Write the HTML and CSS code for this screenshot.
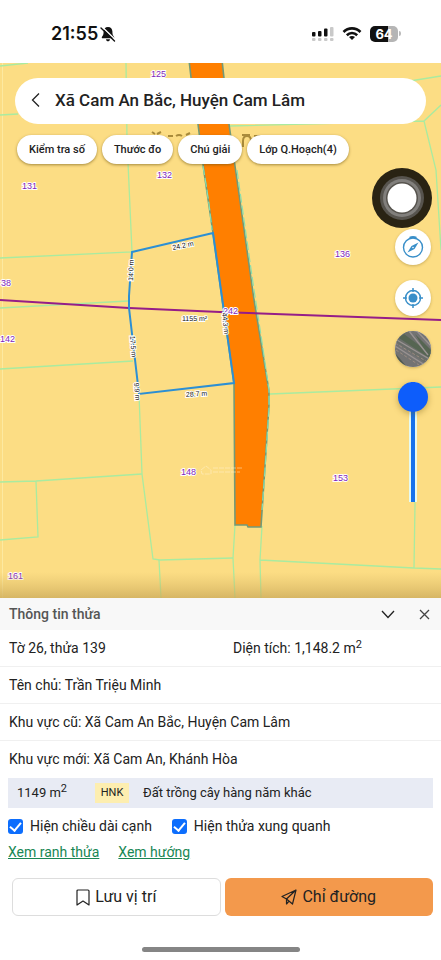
FILE: index.html
```html
<!DOCTYPE html>
<html lang="vi">
<head>
<meta charset="utf-8">
<meta name="viewport" content="width=device-width, initial-scale=1">
<title>Thông tin thửa</title>
<link rel="stylesheet" href="styles.css">
</head>
<body>
<header class="status">
  <div class="status-left">
    <span class="clock">21:55</span>
    <svg width="16" height="16" viewBox="0 0 16 16" aria-hidden="true">
      <path d="M8 1C5.200 1 3.700 3 3.600 5.500C3.500 9 3 9.500 1.800 11.200C1.600 12 2 12.300 2.600 12.300H13.400C14 12.300 14.400 12 14.200 11.200C13 9.500 12.500 9 12.400 5.500C12.300 3 10.800 1 8 1ZM6 13.300C6.300 16 9.700 16 10 13.300Z" fill="#111"/>
      <path d="M2.500 1.200L15.500 13.800" stroke="#fff" stroke-width="1.400"/>
      <path d="M1 2L14.500 15" stroke="#111" stroke-width="1.400" stroke-linecap="round"/>
    </svg>
  </div>
  <div class="status-right">
    <svg width="23" height="16" viewBox="0 0 23 16" aria-hidden="true">
      <g fill="#111"><rect x="1" y="6" width="3.500" height="4.500" rx="1"/><rect x="7" y="5" width="3.500" height="5.500" rx="1"/><rect x="13" y="2.500" width="3.500" height="8" rx="1"/></g>
      <g fill="#c9c9c9"><rect x="19" y="1" width="3.500" height="9.500" rx="1"/><rect x="1" y="12" width="3.500" height="3" rx="1"/><rect x="7" y="12" width="3.500" height="3" rx="1"/><rect x="13" y="12" width="3.500" height="3" rx="1"/><rect x="19" y="12" width="3.500" height="3" rx="1"/></g>
    </svg>
    <svg width="20" height="15" viewBox="0 0 20 15" aria-hidden="true" fill="none" stroke="#111" stroke-width="2.600">
      <path d="M1.500 6C6.300 1.100 13.700 1.100 18.500 6"/><path d="M4.800 9.200C7.800 6.300 12.200 6.300 15.200 9.200"/>
      <path d="M10 14L7 11C8.700 9.600 11.300 9.600 13 11Z" fill="#111" stroke="none"/>
    </svg>
    <div class="battery"><span class="level">64</span><i class="battery-tip"></i></div>
  </div>
</header>

<main class="map">
  <svg class="map-canvas" viewBox="0 63 441 535" preserveAspectRatio="xMidYMid slice" role="img" aria-label="Bản đồ thửa đất">
    <defs><linearGradient id="fade" x1="0" y1="0" x2="0" y2="1"><stop offset="0" stop-color="#d9b866" stop-opacity="0"/><stop offset="1" stop-color="#cdac5c" stop-opacity=".8"/></linearGradient></defs>
    <rect y="63" width="441" height="535" fill="#fcdd84"/>
    <path d="M2.500 63V598" stroke="#fde9a0"/>
    <g fill="none" stroke="#7d5f14" stroke-width="2" opacity=".65">
      <path d="M152 132l3 2M157 134l4-2M168 136h5M176 136q3-2 6 0M186 135l4-2M242 135h8M243 147v-6q0-5 4-5t4 5v6h4M254 136h6"/>
    </g>
    <g fill="none" stroke="#a9eba0" stroke-width="1.300">
      <path d="M0 66L28 63M126 63L127 140L132 252L0 258M0 308L128 301M0 369L133 361M139 394L142 474L153 559L160 560L233 558"/>
      <path d="M0 482L36 481L142 474M36 481L38 537L0 540M159 560L161 598M235 525L233 558L235 598M262 526L260 560L261 598M260 560L414 568L441 569M414 400L415 504L414 568M270 394L441 387M229 126L424 121L441 105M410 81L441 76M424 121L436 170L441 250M0 115L18 114"/>
    </g>
    <path d="M189 60L192 86L198 124L204 172L213 233L223 306L234 384L235 525H247L248 527H261L269 405V391L254 300L243 222L235 166L229 124L222 60Z" fill="#ff7f00" stroke="#739a78" stroke-width="1.600"/>
    <path d="M203 166L206 184L209 204L212 230M237 170L244 220L254 290L262 342L269 390V408L265 470L262 510" fill="none" stroke="#89dfaf" stroke-width="1.200" stroke-dasharray="9 3"/>
    <path d="M0 300L129 308L220 312L441 320" fill="none" stroke="#951d88" stroke-width="2"/>
    <path d="M132 252L213 233L234 383L139 394L129 308V296Z" fill="none" stroke="#2c8fd4" stroke-width="2"/>
    <g fill="none" stroke="#fff3d1" stroke-width="1" opacity=".5"><path d="M201 470l5-4 5 4v4h-9zM213 468h29M213 472h27" stroke-dasharray="5 1"/></g>
    <g class="plot">
      <text x="151" y="77">125</text><text x="157" y="178">132</text><text x="22" y="189">131</text><text x="1" y="286">38</text><text x="0" y="342">142</text><text x="335" y="257">136</text><text x="223" y="314">242</text><text x="181" y="475">148</text><text x="333" y="481">153</text><text x="8" y="579">161</text>
    </g>
    <g class="measure">
      <text transform="translate(173 250) rotate(-12)">24.2 m</text>
      <text transform="translate(133 281) rotate(-88)">14.0 m</text>
      <text transform="translate(130 336) rotate(85)">17.5 m</text>
      <text transform="translate(134 383) rotate(85)">9.9 m</text>
      <text transform="translate(186 397) rotate(-4)">28.7 m</text>
      <text transform="translate(222 313) rotate(84)">44.3 m</text>
      <text x="182" y="321">1155 m²</text>
    </g>
    <rect y="572" width="441" height="26" fill="url(#fade)"/>
  </svg>

  <div class="search">
    <button class="icon-button" aria-label="Quay lại"><svg width="10" height="16" viewBox="0 0 10 16" fill="none" stroke="#222" stroke-width="1.300"><path d="M8 1.500L1.500 8L8 14.500"/></svg></button>
    <h1>Xã Cam An Bắc, Huyện Cam Lâm</h1>
  </div>
  <nav class="chips">
    <button>Kiểm tra số</button><button>Thước đo</button><button>Chú giải</button><button>Lớp Q.Hoạch(4)</button>
  </nav>
  <div class="tools">
    <button class="touch" aria-label="Trợ năng"><svg width="60" height="60" viewBox="0 0 60 60"><circle cx="30" cy="30" r="30" fill="#292313"/><circle cx="30" cy="30" r="22" fill="#57544e"/><circle cx="30" cy="30" r="19" fill="#817f7c"/><circle cx="30" cy="30" r="16" fill="#56534d"/><circle cx="30" cy="30" r="14.500" fill="#fff"/></svg></button>
    <button class="tool" aria-label="La bàn"><svg width="24" height="24" viewBox="0 0 24 24"><circle cx="12" cy="12.500" r="9.500" fill="none" stroke="#398fc9" stroke-width="1.400"/><path d="M8 2Q12 0 16 2L15 3.300H9Z" fill="#398fc9"/><path d="M17.500 7.500L13.500 14L6.500 17.500L10.500 11Z" fill="#398fc9"/><circle cx="12" cy="12.500" r=".8" fill="#fff"/></svg></button>
    <button class="tool" aria-label="Vị trí của tôi"><svg width="24" height="24" viewBox="0 0 24 24" stroke="#398fc9" stroke-width="1.500"><circle cx="12" cy="12" r="7.500" fill="none"/><circle cx="12" cy="12" r="4.500" fill="#398fc9" stroke="none"/><path d="M12 2V6M12 18V22M2 12H6M18 12H22"/></svg></button>
    <button class="tool" aria-label="Ảnh vệ tinh"><svg width="36" height="36" viewBox="0 0 36 36"><rect width="36" height="36" fill="#737373"/><path d="M0 0H14L36 22V36L0 10Z" fill="#6a6e69"/><path d="M9 3L29 18L20 3L36 19V28L4 7Z" fill="#566552"/><path d="M0 22L12 36H0Z" fill="#50594e"/><g fill="none" stroke="#999292" stroke-width="1.400"><path d="M2 9L36 29M0 15L33 36M14 0L33 24M22 0L36 15"/></g><path d="M0 12L36 33M1 19L27 36" fill="none" stroke="#9c8c80" stroke-width="1" stroke-dasharray="3 2"/></svg></button>
    <input class="opacity" type="range" min="0" max="100" value="100" aria-label="Độ mờ lớp bản đồ">
  </div>
</main>

<section class="sheet">
  <header class="sheet-head">
    <h2>Thông tin thửa</h2>
    <button class="icon-button" aria-label="Thu gọn"><svg width="14" height="9" viewBox="0 0 14 9" fill="none" stroke="#222" stroke-width="1.300"><path d="M1 1L7 7.500L13 1"/></svg></button>
    <button class="icon-button" aria-label="Đóng"><svg width="11" height="11" viewBox="0 0 11 11" fill="none" stroke="#444" stroke-width="1.300"><path d="M1 1L10 10M10 1L1 10"/></svg></button>
  </header>
  <div class="row two"><span>Tờ 26, thửa 139</span><span>Diện tích: 1,148.2 m<sup>2</sup></span></div>
  <div class="row">Tên chủ: Trần Triệu Minh</div>
  <div class="row">Khu vực cũ: Xã Cam An Bắc, Huyện Cam Lâm</div>
  <div class="row">Khu vực mới: Xã Cam An, Khánh Hòa</div>
  <div class="land"><span class="area">1149 m<sup>2</sup></span><span class="code">HNK</span><span>Đất trồng cây hàng năm khác</span></div>
  <div class="checks">
    <label><input type="checkbox" checked>Hiện chiều dài cạnh</label>
    <label><input type="checkbox" checked>Hiện thửa xung quanh</label>
  </div>
  <div class="links"><a href="#ranh">Xem ranh thửa</a><a href="#huong">Xem hướng</a></div>
  <div class="actions">
    <button class="save"><svg width="14" height="17" viewBox="0 0 14 17" fill="none" stroke="#222" stroke-width="1.200" stroke-linejoin="round"><path d="M1 16V2Q1 1 2 1H12Q13 1 13 2V16L7 12Z"/></svg>Lưu vị trí</button>
    <button class="go"><svg width="16" height="16" viewBox="0 0 16 16" fill="none" stroke="#222" stroke-width="1.200" stroke-linejoin="round"><path d="M15 1L1 7.500L5.500 10L11.500 15ZM15 1L5.500 10V15L8 12"/></svg>Chỉ đường</button>
  </div>
  <div class="home"></div>
</section>
</body>
</html>
```
FILE: styles.css
```css
* { box-sizing: border-box; }
body {
  margin: 0;
  min-height: 100vh;
  display: flex;
  flex-direction: column;
  background: #fff;
  color: #222;
  font: 14px/20px Roboto, "Liberation Sans", sans-serif;
}
button { margin: 0; padding: 0; border: 0; background: none; color: inherit; font: inherit; }
svg { display: block; }
h1, h2 { margin: 0; font-weight: 500; }
sup { font-size: 11px; line-height: 0; vertical-align: 5px; }

.status {
  height: 63px;
  padding: 4px 40px 0 51px;
  display: flex;
  align-items: center;
  justify-content: space-between;
}
.status-left, .status-right { display: flex; align-items: center; }
.status-left { gap: 2px; }
.status-right { gap: 8px; }
.clock { font: 600 18px/20px Inter, sans-serif; color: #111; }
.battery { display: flex; align-items: center; gap: 1px; }
.level {
  width: 28px;
  border-radius: 5px;
  background: linear-gradient(90deg, #111 64%, #b5b5b5 64%);
  color: #fff;
  font: 700 13px/16px Inter, sans-serif;
  text-align: center;
}
.battery-tip { width: 2px; height: 5px; border-radius: 0 2px 2px 0; background: #bbb; }

.map {
  position: relative;
  flex: 1 0 auto;
  padding: 15px 0 95px;
  background: #fcdd84;
}
.map-canvas { position: absolute; inset: 0; width: 100%; height: 100%; }
.plot { font: 9px "Liberation Sans", sans-serif; fill: #8126bb; stroke: #fff; stroke-width: 2px; paint-order: stroke; }
.measure { font: 7px "Liberation Sans", sans-serif; fill: #111; stroke: #fff; stroke-width: 2px; paint-order: stroke; text-rendering: geometricPrecision; }
.search {
  position: relative;
  height: 46px;
  margin: 0 15px;
  padding: 0 16px 2px;
  display: flex;
  align-items: center;
  gap: 14px;
  border-radius: 23px;
  background: #fff;
}
.search h1 { font-size: 17px; line-height: 24px; }
.chips { position: relative; display: flex; gap: 5px; margin: 11px 17px 4px; }
.chips button {
  padding: 0 12px;
  border-radius: 15px;
  background: #fff;
  box-shadow: 0 1px 3px #6b510d99;
  font-size: 11px;
  font-weight: 500;
  line-height: 29px;
  white-space: nowrap;
}
.tools { position: relative; display: flex; flex-direction: column; align-items: flex-end; gap: 15px; width: 60px; margin: 0 9px 0 auto; }
.touch { margin-bottom: -14px; }
.tool {
  width: 36px;
  height: 36px;
  margin-right: 1px;
  display: grid;
  place-items: center;
  border-radius: 50%;
  overflow: hidden;
  background: #fff;
  box-shadow: 0 1px 3px #6b510d55;
}
.opacity {
  appearance: none;
  writing-mode: vertical-lr;
  direction: rtl;
  width: 36px;
  height: 120px;
  margin: 0 1px 0 0;
  background: linear-gradient(#1572ec, #1572ec) center / 4px 100% no-repeat, linear-gradient(#e5faf1, #e5faf1) center / 8px 100% no-repeat;
}
.opacity::-webkit-slider-thumb {
  appearance: none;
  width: 30px;
  height: 30px;
  border-radius: 50%;
  background: #0d5dfb;
  box-shadow: 0 2px 6px #6b510d66;
}

.sheet-head {
  height: 32px;
  padding: 0 11px 0 9px;
  display: flex;
  align-items: center;
  gap: 24px;
  background: #f8f8f8;
}
.sheet-head h2 { flex: 1; font-size: 14px; line-height: 20px; color: #555; }
.row { height: 37px; padding: 8px 9px; border-bottom: 1px solid #f0f0f0; }
.row:nth-of-type(4) { border-bottom: 0; }
.two { display: grid; grid-template-columns: 224px 1fr; }
.land {
  margin: 0 8px;
  height: 30px;
  padding: 0 9px;
  display: flex;
  align-items: center;
  background: #e8ebf4;
  font-size: 13px;
}
.area { width: 78px; }
.code { width: 34px; margin-right: 14px; background: #fdeeb0; font-size: 11px; text-align: center; }
.checks { display: flex; gap: 20px; padding: 8px 8px 0; }
.checks label { display: flex; align-items: center; gap: 7px; }
.checks input {
  appearance: none;
  width: 15px;
  height: 15px;
  margin: 0;
  padding-bottom: 2px;
  border-radius: 3px;
  background: #0d6efd;
  display: grid;
  place-items: center;
}
.checks input:checked::after {
  content: "";
  width: 5px;
  height: 9px;
  border: solid #fff;
  border-width: 0 2px 2px 0;
  transform: rotate(40deg);
}
.links { display: flex; gap: 19px; padding: 6px 8px 0; }
.links a { color: #198754; }
.actions { display: grid; grid-template-columns: 1fr 1fr; gap: 4px; padding: 16px 8px 0 12px; }
.actions button {
  height: 38px;
  display: flex;
  align-items: center;
  justify-content: center;
  gap: 5px;
  border-radius: 6px;
  font-size: 16px;
}
.save { border: 1px solid #ddd; }
.go { background: #f3994c; }
.home { width: 158px; height: 5px; margin: 31px auto 8px; border-radius: 3px; background: #858585; }
```
